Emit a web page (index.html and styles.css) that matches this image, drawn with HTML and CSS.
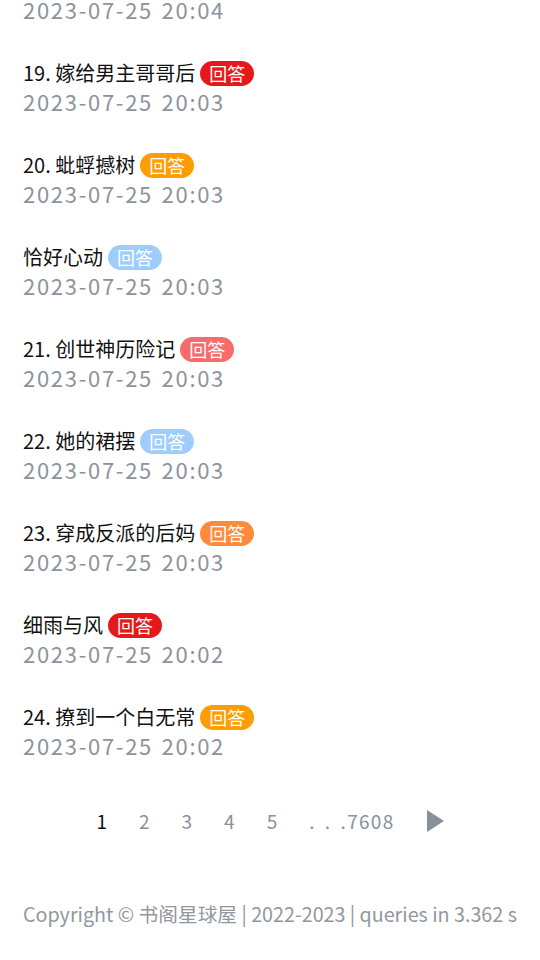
FILE: index.html
```html
<!DOCTYPE html>
<html lang="zh-CN">
<head>
<meta charset="utf-8">
<title>书阁星球屋</title>
<link rel="stylesheet" href="styles.css">
</head>
<body>
<main class="page">
  <ul class="list">
    <li class="item item-partial">
      <div class="date">2023-07-25 20:04</div>
    </li>
    <li class="item">
      <div class="title"><span class="name">19. 嫁给男主哥哥后</span><span class="badge red">回答</span></div>
      <div class="date">2023-07-25 20:03</div>
    </li>
    <li class="item">
      <div class="title"><span class="name">20. 蚍蜉撼树</span><span class="badge orange">回答</span></div>
      <div class="date">2023-07-25 20:03</div>
    </li>
    <li class="item">
      <div class="title"><span class="name">恰好心动</span><span class="badge blue">回答</span></div>
      <div class="date">2023-07-25 20:03</div>
    </li>
    <li class="item">
      <div class="title"><span class="name">21. 创世神历险记</span><span class="badge pink">回答</span></div>
      <div class="date">2023-07-25 20:03</div>
    </li>
    <li class="item">
      <div class="title"><span class="name">22. 她的裙摆</span><span class="badge blue">回答</span></div>
      <div class="date">2023-07-25 20:03</div>
    </li>
    <li class="item">
      <div class="title"><span class="name">23. 穿成反派的后妈</span><span class="badge tangerine">回答</span></div>
      <div class="date">2023-07-25 20:03</div>
    </li>
    <li class="item">
      <div class="title"><span class="name">细雨与风</span><span class="badge red">回答</span></div>
      <div class="date">2023-07-25 20:02</div>
    </li>
    <li class="item">
      <div class="title"><span class="name">24. 撩到一个白无常</span><span class="badge orange">回答</span></div>
      <div class="date">2023-07-25 20:02</div>
    </li>
  </ul>

  <nav class="pager">
    <span class="page-link current">1</span>
    <span class="page-link">2</span>
    <span class="page-link">3</span>
    <span class="page-link">4</span>
    <span class="page-link">5</span>
    <span class="page-link more"><span class="dots">..</span><span class="last">.7608</span></span>
    <span class="page-next" aria-label="下一页"><svg width="17" height="22" viewBox="0 0 17 22"><polygon points="0,0 17,11 0,22" fill="#8a9099"/></svg></span>
  </nav>

  <footer class="footer">Copyright © 书阁星球屋 | 2022-2023 | queries in 3.362 s</footer>
</main>
</body>
</html>
```

FILE: styles.css
```css
html, body {
  margin: 0;
  padding: 0;
  background: #ffffff;
}

body {
  font-family: "Noto Sans CJK SC", "Noto Sans", sans-serif;
  color: #1a1a1a;
}

.page {
  padding: 0 23px;
}

.list {
  list-style: none;
  margin: 0;
  padding: 0;
  display: flex;
  flex-direction: column;
  gap: 36px;
}

.item-partial {
  margin-top: -5px;
}

.title {
  display: flex;
  align-items: center;
  height: 28px;
  font-size: 20px;
  line-height: 28px;
  color: #111111;
}

.badge {
  margin-left: 5px;
  height: 25px;
  line-height: 25px;
  padding: 0 9px;
  border-radius: 13px;
  font-size: 18px;
  color: #ffffff;
}

.badge.red { background: #e6191a; }
.badge.orange { background: #ff9c00; }
.badge.blue { background: #9fcdfb; }
.badge.pink { background: #f76b6b; }
.badge.tangerine { background: #ff8a3b; }

.date {
  height: 28px;
  line-height: 28px;
  font-size: 22px;
  letter-spacing: 1.7px;
  word-spacing: 2px;
  color: #8d939c;
  white-space: nowrap;
}

.pager {
  margin-top: 48px;
  display: flex;
  justify-content: center;
  align-items: center;
  gap: 32px;
  height: 28px;
  font-size: 19px;
  line-height: 28px;
  color: #8a9099;
}

.page-link.current {
  color: #111111;
}

.dots {
  letter-spacing: 10.4px;
}

.last {
  letter-spacing: 1.3px;
}

.page-next {
  display: flex;
  align-items: center;
}

.footer {
  margin-top: 65px;
  height: 28px;
  line-height: 28px;
  font-size: 19.7px;
  color: #9197a0;
  white-space: nowrap;
}
```
